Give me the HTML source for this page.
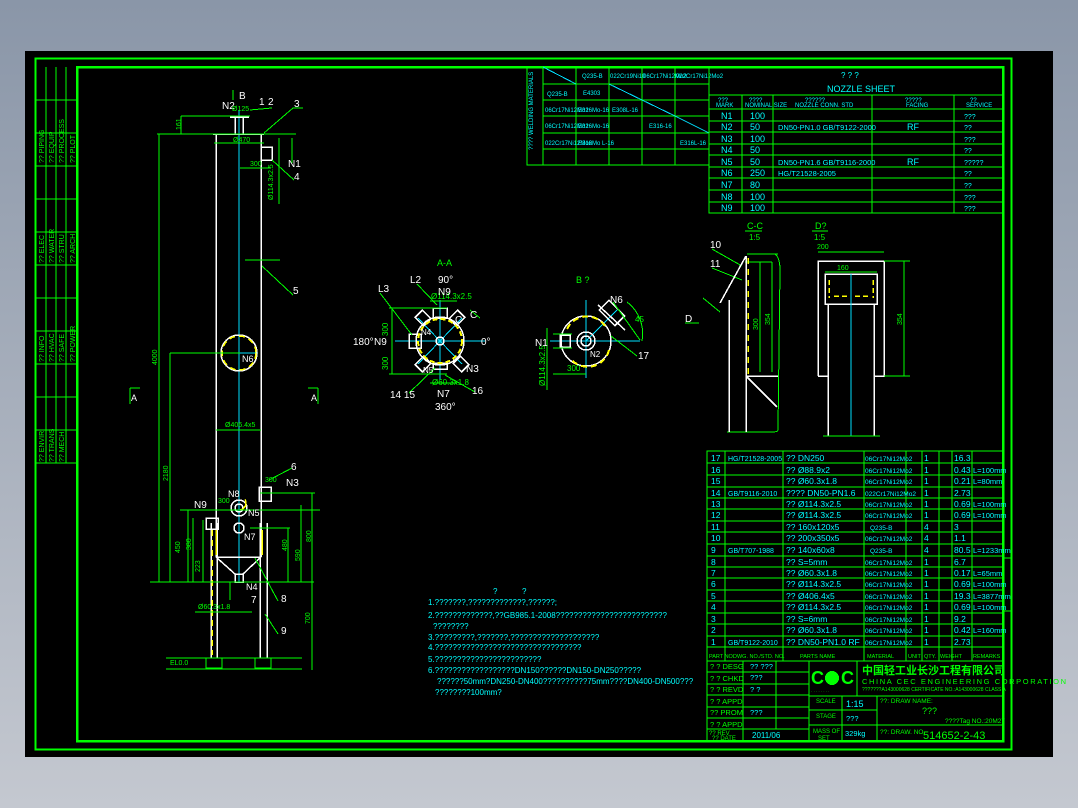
<!DOCTYPE html>
<html><head><meta charset="utf-8"><style>
html,body{margin:0;padding:0;width:1078px;height:808px;overflow:hidden;background:linear-gradient(#8a96a8,#c4c8d0);}
svg{position:absolute;left:0;top:0}
text{font-family:"Liberation Sans","Noto Sans CJK SC",sans-serif}
.g{stroke:#00ff00;fill:none;stroke-width:1}
.G{stroke:#00ff00;fill:none;stroke-width:2}
.w{stroke:#fff;fill:none;stroke-width:1.5}
.c{stroke:#00e0ff;fill:none;stroke-width:1}
.y{stroke:#ffff00;fill:none;stroke-width:2;stroke-dasharray:6 4}
.tc{fill:#00ffff;font-size:9px}
.tg{fill:#00ff00;font-size:8px}
.tw{fill:#fff;font-size:10px}
</style></head><body>
<svg width="1078" height="808" viewBox="0 0 1078 808" shape-rendering="crispEdges">
<rect x="25" y="51" width="1028" height="706" fill="#000"/>
<!-- frames -->
<rect x="35.5" y="58.5" width="976" height="691" class="G"/>
<rect x="77" y="67" width="926" height="674" class="G" style="stroke-width:2.5"/>
<!-- left strip -->
<g class="g">
<line x1="46" y1="67" x2="46" y2="463"/><line x1="56" y1="67" x2="56" y2="463"/><line x1="66" y1="67" x2="66" y2="463"/>
<line x1="35" y1="100" x2="77" y2="100"/><line x1="35" y1="133" x2="77" y2="133"/><line x1="35" y1="166" x2="77" y2="166"/>
<line x1="35" y1="199" x2="77" y2="199"/><line x1="35" y1="232" x2="77" y2="232"/><line x1="35" y1="265" x2="77" y2="265"/>
<line x1="35" y1="298" x2="77" y2="298"/><line x1="35" y1="331" x2="77" y2="331"/><line x1="35" y1="364" x2="77" y2="364"/>
<line x1="35" y1="397" x2="77" y2="397"/><line x1="35" y1="430" x2="77" y2="430"/><line x1="35" y1="463" x2="77" y2="463"/>
</g>
<g class="tg" style="font-size:7px">
<text transform="translate(44,163) rotate(-90)">?? PIPING</text><text transform="translate(54,163) rotate(-90)">?? EQUIP</text><text transform="translate(64,163) rotate(-90)">?? PROCESS</text><text transform="translate(75,163) rotate(-90)">?? PLOT</text>
<text transform="translate(44,263) rotate(-90)">?? ELEC</text><text transform="translate(54,263) rotate(-90)">?? WATER</text><text transform="translate(64,263) rotate(-90)">?? STRU</text><text transform="translate(75,263) rotate(-90)">?? ARCH</text>
<text transform="translate(44,362) rotate(-90)">?? INFO</text><text transform="translate(54,362) rotate(-90)">?? HVAC</text><text transform="translate(64,362) rotate(-90)">?? SAFE</text><text transform="translate(75,362) rotate(-90)">?? POWER</text>
<text transform="translate(44,462) rotate(-90)">?? ENVIR</text><text transform="translate(54,462) rotate(-90)">?? TRANS</text><text transform="translate(64,462) rotate(-90)">?? MECH</text>
</g>
<!-- welding table -->
<g class="g">
<rect x="527" y="67" width="182" height="98"/>
<line x1="543" y1="67" x2="543" y2="165"/><line x1="576" y1="67" x2="576" y2="165"/><line x1="609" y1="67" x2="609" y2="165"/><line x1="642" y1="67" x2="642" y2="165"/><line x1="675" y1="67" x2="675" y2="165"/>
<line x1="543" y1="84" x2="709" y2="84"/><line x1="543" y1="100" x2="709" y2="100"/><line x1="543" y1="116" x2="709" y2="116"/><line x1="543" y1="133" x2="709" y2="133"/><line x1="543" y1="149" x2="709" y2="149"/>
</g>
<g class="c"><line x1="543" y1="67" x2="576" y2="84"/><line x1="609" y1="84" x2="642" y2="100"/><line x1="642" y1="100" x2="675" y2="116"/><line x1="675" y1="116" x2="709" y2="133"/></g>
<g class="tc" style="font-size:6px">
<text x="582" y="78">Q235-B</text><text x="610" y="78">022Cr19Ni10</text><text x="643" y="78">06Cr17Ni12Mo2</text><text x="676" y="78">022Cr17Ni12Mo2</text>
<text x="547" y="96">Q235-B</text><text x="583" y="95">E4303</text>
<text x="545" y="112">06Cr17Ni12Mo2</text><text x="578" y="112">E316Mo-16</text><text x="612" y="112">E308L-16</text>
<text x="545" y="128">06Cr17Ni12Mo2</text><text x="578" y="128">E316Mo-16</text><text x="649" y="128">E316-16</text>
<text x="545" y="145">022Cr17Ni12Mo2</text><text x="578" y="145">E316Mo L-16</text><text x="680" y="145">E316L-16</text>
<text transform="translate(533,150) rotate(-90)">???? WELDING MATERIALS</text>
</g>
<!-- nozzle table -->
<g class="g">
<rect x="709" y="67" width="294" height="146"/>
<line x1="709" y1="95" x2="1003" y2="95"/><line x1="709" y1="109" x2="1003" y2="109"/>
<line x1="709" y1="121" x2="1003" y2="121"/><line x1="709" y1="132" x2="1003" y2="132"/><line x1="709" y1="144" x2="1003" y2="144"/><line x1="709" y1="155" x2="1003" y2="155"/><line x1="709" y1="167" x2="1003" y2="167"/><line x1="709" y1="178" x2="1003" y2="178"/><line x1="709" y1="190" x2="1003" y2="190"/><line x1="709" y1="202" x2="1003" y2="202"/>
<line x1="742" y1="95" x2="742" y2="213"/><line x1="773" y1="95" x2="773" y2="213"/><line x1="872" y1="95" x2="872" y2="213"/><line x1="954" y1="95" x2="954" y2="213"/>
</g>
<g class="tc">
<text x="841" y="78" font-size="8">? ? ?</text><text x="827" y="92" font-size="9">NOZZLE SHEET</text>
<g font-size="6"><text x="718" y="102">???</text><text x="716" y="107">MARK</text><text x="749" y="102">????</text><text x="745" y="107">NOMINAL SIZE</text><text x="805" y="102">??????</text><text x="795" y="107">NOZZLE CONN. STD</text><text x="905" y="102">?????</text><text x="906" y="107">FACING</text><text x="970" y="102">??</text><text x="966" y="107">SERVICE</text></g>
<text x="721" y="119">N1</text><text x="750" y="119">100</text><text x="964" y="119" font-size="7">???</text>
<text x="721" y="130">N2</text><text x="750" y="130">50</text><text x="778" y="130" font-size="7.5">DN50-PN1.0 GB/T9122-2000</text><text x="907" y="130">RF</text><text x="964" y="130" font-size="7">??</text>
<text x="721" y="142">N3</text><text x="750" y="142">100</text><text x="964" y="142" font-size="7">???</text>
<text x="721" y="153">N4</text><text x="750" y="153">50</text><text x="964" y="153" font-size="7">??</text>
<text x="721" y="165">N5</text><text x="750" y="165">50</text><text x="778" y="165" font-size="7.5">DN50-PN1.6 GB/T9116-2000</text><text x="907" y="165">RF</text><text x="964" y="165" font-size="7">?????</text>
<text x="721" y="176">N6</text><text x="750" y="176">250</text><text x="778" y="176" font-size="7.5">HG/T21528-2005</text><text x="964" y="176" font-size="7">??</text>
<text x="721" y="188">N7</text><text x="750" y="188">80</text><text x="964" y="188" font-size="7">??</text>
<text x="721" y="200">N8</text><text x="750" y="200">100</text><text x="964" y="200" font-size="7">???</text>
<text x="721" y="211">N9</text><text x="750" y="211">100</text><text x="964" y="211" font-size="7">???</text>
</g>
<!-- vessel elevation -->
<g class="c"><line x1="239" y1="110" x2="239" y2="582"/><line x1="222" y1="353" x2="258" y2="353"/></g>
<g class="w">
<line x1="216" y1="134" x2="216" y2="557"/><line x1="261" y1="134" x2="261" y2="557"/>
<line x1="213" y1="134" x2="264" y2="134"/>
<line x1="235" y1="118" x2="235" y2="134"/><line x1="243" y1="118" x2="243" y2="134"/><line x1="230" y1="117" x2="249" y2="117"/>
<rect x="261" y="147" width="11" height="13"/>
<circle cx="239" cy="353" r="18"/>
<line x1="216" y1="557" x2="261" y2="557"/><line x1="216" y1="557" x2="235" y2="574"/><line x1="261" y1="557" x2="243" y2="574"/><rect x="235" y="574" width="8" height="8"/>
<line x1="211" y1="523" x2="211" y2="658"/><line x1="217" y1="523" x2="217" y2="658"/><line x1="260" y1="523" x2="260" y2="658"/><line x1="267" y1="523" x2="267" y2="658"/>
<rect x="206" y="518" width="12" height="11"/><rect x="259" y="487" width="12" height="14"/>
<circle cx="239" cy="508" r="8"/><circle cx="239" cy="508" r="4"/><circle cx="239" cy="528" r="5"/>
</g>
<circle cx="239" cy="353" r="17" class="y" style="stroke-width:1.5"/>
<line x1="212" y1="530" x2="212" y2="655" class="y" style="stroke-width:1.5"/><line x1="216" y1="530" x2="216" y2="555" stroke="#ff0" stroke-width="1.5"/><line x1="262" y1="530" x2="262" y2="555" stroke="#ff0" stroke-width="1.5"/>
<circle cx="239" cy="503" r="7" stroke="#ff0" fill="none" stroke-width="1.5" stroke-dasharray="10 30"/>
<g class="g">
<rect x="206" y="658" width="16" height="10"/><rect x="255" y="658" width="16" height="10"/>
<line x1="166" y1="669" x2="302" y2="669"/><line x1="166" y1="658" x2="302" y2="658" />
<line x1="157" y1="134" x2="296" y2="134"/><line x1="159" y1="134" x2="159" y2="582"/><line x1="170" y1="353" x2="170" y2="582"/><line x1="170" y1="353" x2="240" y2="353"/>
<line x1="150" y1="582" x2="314" y2="582"/>
<line x1="181" y1="116" x2="250" y2="116"/><line x1="181" y1="116" x2="181" y2="134"/>
<line x1="214" y1="143" x2="264" y2="143"/><line x1="292" y1="138" x2="292" y2="163"/><line x1="279" y1="138" x2="279" y2="204"/>
<line x1="240" y1="168" x2="271" y2="168"/><line x1="264" y1="133" x2="293" y2="108"/><line x1="293" y1="108" x2="303" y2="108"/>
<line x1="272" y1="160" x2="294" y2="180"/><line x1="250" y1="110" x2="272" y2="108"/>
<line x1="245" y1="260" x2="280" y2="260"/><line x1="262" y1="266" x2="293" y2="295"/>
<line x1="216" y1="430" x2="261" y2="430"/>
<line x1="180" y1="510" x2="320" y2="510"/><line x1="193" y1="518" x2="193" y2="582"/><line x1="203" y1="520" x2="203" y2="582"/><line x1="188" y1="510" x2="188" y2="582"/>
<line x1="260" y1="493" x2="315" y2="493"/><line x1="312" y1="493" x2="312" y2="670"/><line x1="301" y1="505" x2="301" y2="582"/>
<line x1="250" y1="528" x2="290" y2="528"/><line x1="288" y1="528" x2="288" y2="582"/>
<line x1="195" y1="612" x2="252" y2="612"/><line x1="230" y1="582" x2="230" y2="600"/>
<line x1="269" y1="480" x2="292" y2="468"/><line x1="255" y1="558" x2="278" y2="601"/><line x1="265" y1="614" x2="278" y2="634"/>
<line x1="130" y1="388" x2="130" y2="404"/><line x1="130" y1="388" x2="140" y2="388"/><line x1="318" y1="388" x2="318" y2="404"/><line x1="308" y1="388" x2="318" y2="388"/>
<line x1="233" y1="90" x2="233" y2="100"/>
</g>
<g class="tw">
<text x="239" y="99" font-size="10">B</text><text x="222" y="109">N2</text><text x="259" y="105">1</text><text x="268" y="105">2</text><text x="294" y="107">3</text>
<text x="288" y="167">N1</text><text x="294" y="180">4</text><text x="293" y="294">5</text><text x="242" y="362" font-size="9">N6</text>
<text x="291" y="470">6</text><text x="286" y="486">N3</text><text x="194" y="508">N9</text><text x="228" y="497" font-size="9">N8</text><text x="248" y="516" font-size="9">N5</text><text x="244" y="540" font-size="9">N7</text><text x="246" y="590" font-size="9">N4</text><text x="251" y="603">7</text><text x="281" y="602">8</text><text x="281" y="634">9</text>
<text x="131" y="401" font-size="9">A</text><text x="311" y="401" font-size="9">A</text>
</g>
<g class="tg" style="font-size:7px">
<text x="232" y="111">Ø125</text><text x="233" y="142">Ø470</text><text x="250" y="166">300</text><text transform="translate(273,200) rotate(-90)">Ø114.3x2.5</text>
<text transform="translate(157,365) rotate(-90)">4000</text><text transform="translate(168,481) rotate(-90)">2180</text><text transform="translate(181,130) rotate(-90)">161</text>
<text x="225" y="427">Ø406.4x5</text><text x="265" y="482">300</text><text x="218" y="503">300</text>
<text transform="translate(180,553) rotate(-90)">450</text><text transform="translate(191,550) rotate(-90)">380</text><text transform="translate(200,572) rotate(-90)">223</text>
<text transform="translate(287,551) rotate(-90)">480</text><text transform="translate(300,561) rotate(-90)">590</text><text transform="translate(311,542) rotate(-90)">800</text>
<text x="198" y="609">Ø60.3x1.8</text><text transform="translate(310,624) rotate(-90)">700</text><text x="170" y="665">EL0.0</text>
</g>
<!-- A-A -->
<g class="c"><line x1="395" y1="341" x2="485" y2="341"/><line x1="440" y1="300" x2="440" y2="380"/><line x1="418" y1="318" x2="462" y2="364"/><line x1="418" y1="364" x2="462" y2="318"/></g>
<g class="w">
<circle cx="440" cy="341" r="24"/><circle cx="440" cy="341" r="4"/>
<rect x="433" y="308" width="14" height="10"/><rect x="409" y="334" width="12" height="14"/><rect x="433" y="363" width="14" height="6"/>
<rect x="418" y="312" width="10" height="12" transform="rotate(-45 423 318)"/><rect x="452" y="312" width="10" height="12" transform="rotate(45 457 318)"/>
<rect x="418" y="358" width="10" height="12" transform="rotate(45 423 364)"/><rect x="456" y="358" width="10" height="12" transform="rotate(-45 461 364)"/>
</g>
<circle cx="440" cy="341" r="22" stroke="#ff0" fill="none" stroke-width="2" stroke-dasharray="5 3"/>
<g class="g"><line x1="389" y1="308" x2="447" y2="308"/><line x1="389" y1="374" x2="447" y2="374"/><line x1="392" y1="308" x2="392" y2="374"/>
<line x1="380" y1="293" x2="412" y2="335"/><line x1="417" y1="284" x2="437" y2="305"/><line x1="409" y1="393" x2="435" y2="368"/><line x1="445" y1="375" x2="475" y2="392"/>
<line x1="430" y1="301" x2="457" y2="301"/><line x1="430" y1="383" x2="457" y2="383"/><line x1="470" y1="310" x2="480" y2="318"/></g>
<g class="tg"><text x="437" y="266" font-size="9">A-A</text><text transform="translate(388,336) rotate(-90)">300</text><text transform="translate(388,370) rotate(-90)">300</text><text x="431" y="299">Ø114.3x2.5</text><text x="432" y="385">Ø60.3x1.8</text></g>
<g class="tw" font-size="9"><text x="438" y="283">90°</text><text x="438" y="295">N9</text><text x="410" y="283">L2</text><text x="378" y="292">L3</text><text x="353" y="345">180°</text><text x="374" y="345">N9</text><text x="481" y="345">0°</text><text x="421" y="335" font-size="8">N4</text><text x="466" y="372">N3</text><text x="423" y="373" font-size="8">N5</text><text x="437" y="397">N7</text><text x="435" y="410">360°</text><text x="390" y="398">14 15</text><text x="472" y="394">16</text><text x="455" y="323">C</text><text x="470" y="318">C</text></g>
<!-- B view -->
<g class="c"><line x1="550" y1="341" x2="640" y2="341"/><line x1="586" y1="300" x2="586" y2="378"/><line x1="586" y1="341" x2="617" y2="310"/></g>
<g class="w"><circle cx="586" cy="341" r="25"/><circle cx="586" cy="341" r="9"/><circle cx="586" cy="341" r="5"/><rect x="560" y="335" width="10" height="12"/>
<line x1="598" y1="305" x2="625" y2="330"/><rect x="605" y="302" width="14" height="22" transform="rotate(-45 612 313)"/></g>
<path d="M567 329 A22 22 0 0 1 605 326 M609 350 A22 22 0 0 1 570 358" stroke="#ff0" fill="none" stroke-width="2" stroke-dasharray="6 4"/>
<g class="g"><line x1="547" y1="328" x2="547" y2="390"/><line x1="553" y1="334" x2="572" y2="334"/><line x1="553" y1="348" x2="572" y2="348"/><line x1="553" y1="374" x2="586" y2="374"/>
<line x1="613" y1="302" x2="640" y2="340"/><line x1="611" y1="336" x2="637" y2="356"/><path d="M627 302 A40 40 0 0 1 642 341"/></g>
<g class="tg"><text x="576" y="283" font-size="9">B ?</text><text x="567" y="371">300</text><text transform="translate(545,386) rotate(-90)">Ø114.3x2.5</text><text x="635" y="322">45</text></g>
<g class="tw" font-size="9"><text x="535" y="346">N1</text><text x="610" y="303">N6</text><text x="590" y="357" font-size="8">N2</text><text x="638" y="359">17</text></g>
<!-- C-C -->
<g class="g"><line x1="747" y1="254" x2="778" y2="254"/><path d="M747 254 L775 254 Q780 258 780 270 L778 430 Q778 432 772 432 L727 432"/><line x1="745" y1="262" x2="772" y2="262"/><line x1="760" y1="262" x2="760" y2="372"/><line x1="772" y1="262" x2="772" y2="372"/>
<line x1="712" y1="249" x2="742" y2="266"/><line x1="712" y1="268" x2="742" y2="280"/><line x1="703" y1="298" x2="720" y2="312"/><line x1="685" y1="323" x2="699" y2="323"/>
<text x="747" y="229" font-size="9" fill="#0f0" stroke="none">C-C</text><line x1="745" y1="231" x2="762" y2="231"/><text x="749" y="240" font-size="8" fill="#0f0" stroke="none">1:5</text>
<text x="815" y="229" font-size="9" fill="#0f0" stroke="none">D?</text><line x1="812" y1="231" x2="828" y2="231"/><text x="814" y="240" font-size="8" fill="#0f0" stroke="none">1:5</text>
</g>
<g class="w"><line x1="746" y1="256" x2="746" y2="432"/><line x1="729" y1="300" x2="729" y2="432"/><line x1="746" y1="256" x2="720" y2="303"/><line x1="746" y1="376" x2="778" y2="376"/><line x1="746" y1="376" x2="777" y2="407"/></g>
<line x1="748" y1="258" x2="748" y2="376" stroke="#ff0" stroke-width="1.5" stroke-dasharray="6 5"/>
<g class="tw" font-size="8"><text x="710" y="248">10</text><text x="710" y="267">11</text><text x="685" y="322">D</text></g>
<g class="tg" style="font-size:7px"><text transform="translate(758,330) rotate(-90)">300</text><text transform="translate(770,325) rotate(-90)">354</text><text x="817" y="249">200</text><text x="837" y="270">160</text><text transform="translate(902,325) rotate(-90)">354</text></g>
<!-- D -->
<g class="w"><path d="M818 376 L818 261 L884 261 L884 376 L874 376 M828 376 L818 376"/><rect x="825" y="274" width="52" height="30"/><line x1="828" y1="304" x2="828" y2="436"/><line x1="874" y1="304" x2="874" y2="436"/></g>
<line x1="851" y1="274" x2="851" y2="436" class="c"/>
<g class="g"><line x1="818" y1="252" x2="884" y2="252"/><line x1="825" y1="272" x2="877" y2="272"/><line x1="884" y1="261" x2="910" y2="261"/><line x1="884" y1="376" x2="910" y2="376"/><line x1="904" y1="261" x2="904" y2="376"/><line x1="823" y1="436" x2="880" y2="436"/></g>
<path d="M829 280 L829 298 M873 280 L873 298 M834 296 L850 296 M855 296 L870 296" stroke="#ff0" stroke-width="1.5" stroke-dasharray="5 3"/>
<!-- notes -->
<g class="tc" style="font-size:8px">
<text x="493" y="594">?</text><text x="522" y="594">?</text>
<text x="428" y="605">1.???????,?????????????,??????;</text>
<text x="428" y="618">2.?????????????,??GB985.1-2008?????????????????????????</text>
<text x="433" y="629">????????</text>
<text x="428" y="640">3.?????????,???????,????????????????????</text>
<text x="428" y="650">4.?????????????????????????????????</text>
<text x="428" y="662">5.????????????????????????</text>
<text x="428" y="673">6.??????????????????DN150??????DN150-DN250?????</text>
<text x="437" y="684">??????50mm?DN250-DN400??????????75mm????DN400-DN500???</text>
<text x="435" y="695">????????100mm?</text>
</g>
<!-- parts list -->
<g class="g">
<rect x="707" y="451" width="296" height="290"/>
<line x1="725" y1="451" x2="725" y2="661"/><line x1="783" y1="451" x2="783" y2="661"/><line x1="864" y1="451" x2="864" y2="661"/><line x1="906" y1="451" x2="906" y2="661"/><line x1="922" y1="451" x2="922" y2="661"/><line x1="939" y1="451" x2="939" y2="661"/><line x1="952" y1="451" x2="952" y2="661"/><line x1="972" y1="451" x2="972" y2="661"/>
<line x1="707" y1="463" x2="1003" y2="463"/><line x1="707" y1="475" x2="1003" y2="475"/><line x1="707" y1="487" x2="1003" y2="487"/><line x1="707" y1="498" x2="1003" y2="498"/><line x1="707" y1="509" x2="1003" y2="509"/><line x1="707" y1="521" x2="1003" y2="521"/><line x1="707" y1="532" x2="1003" y2="532"/><line x1="707" y1="544" x2="1003" y2="544"/><line x1="707" y1="556" x2="1003" y2="556"/><line x1="707" y1="567" x2="1003" y2="567"/><line x1="707" y1="578" x2="1003" y2="578"/><line x1="707" y1="590" x2="1003" y2="590"/><line x1="707" y1="601" x2="1003" y2="601"/><line x1="707" y1="613" x2="1003" y2="613"/><line x1="707" y1="624" x2="1003" y2="624"/><line x1="707" y1="636" x2="1003" y2="636"/><line x1="707" y1="647" x2="1003" y2="647"/>
<line x1="707" y1="661" x2="1003" y2="661"/>
<line x1="1003" y1="558" x2="1012" y2="558"/><line x1="1003" y1="611" x2="1012" y2="611"/>
<!-- title block -->
<line x1="743" y1="661" x2="743" y2="741"/><line x1="776" y1="661" x2="776" y2="729"/><line x1="809" y1="661" x2="809" y2="741"/>
<line x1="707" y1="672" x2="809" y2="672"/><line x1="707" y1="684" x2="809" y2="684"/><line x1="707" y1="695" x2="809" y2="695"/><line x1="707" y1="707" x2="809" y2="707"/><line x1="707" y1="718" x2="809" y2="718"/><line x1="707" y1="729" x2="809" y2="729"/>
<line x1="857" y1="661" x2="857" y2="696"/><line x1="809" y1="696" x2="1003" y2="696"/>
<line x1="842" y1="696" x2="842" y2="741"/><line x1="877" y1="696" x2="877" y2="741"/><line x1="809" y1="710" x2="877" y2="710"/><line x1="809" y1="725" x2="1003" y2="725"/>
</g>
<g class="tc" style="font-size:8.5px">
<text x="711" y="461">17</text><text x="728" y="461" font-size="7">HG/T21528-2005</text><text x="786" y="461">?? DN250</text>
<text x="711" y="473">16</text><text x="786" y="473">?? Ø88.9x2</text>
<text x="711" y="484">15</text><text x="786" y="484">?? Ø60.3x1.8</text>
<text x="711" y="496">14</text><text x="728" y="496" font-size="7">GB/T9116-2010</text><text x="786" y="496">???? DN50-PN1.6</text>
<text x="711" y="507">13</text><text x="786" y="507">?? Ø114.3x2.5</text>
<text x="711" y="518">12</text><text x="786" y="518">?? Ø114.3x2.5</text>
<text x="711" y="530">11</text><text x="786" y="530">?? 160x120x5</text>
<text x="711" y="541">10</text><text x="786" y="541">?? 200x350x5</text>
<text x="711" y="553">9</text><text x="728" y="553" font-size="7">GB/T707-1988</text><text x="786" y="553">?? 140x60x8</text>
<text x="711" y="565">8</text><text x="786" y="565">?? S=5mm</text>
<text x="711" y="576">7</text><text x="786" y="576">?? Ø60.3x1.8</text>
<text x="711" y="587">6</text><text x="786" y="587">?? Ø114.3x2.5</text>
<text x="711" y="599">5</text><text x="786" y="599">?? Ø406.4x5</text>
<text x="711" y="610">4</text><text x="786" y="610">?? Ø114.3x2.5</text>
<text x="711" y="622">3</text><text x="786" y="622">?? S=6mm</text>
<text x="711" y="633">2</text><text x="786" y="633">?? Ø60.3x1.8</text>
<text x="711" y="645">1</text><text x="728" y="645" font-size="7">GB/T9122-2010</text><text x="786" y="645">?? DN50-PN1.0 RF</text>
<g font-size="6.5"><text x="865" y="461">06Cr17Ni12Mo2</text><text x="865" y="473">06Cr17Ni12Mo2</text><text x="865" y="484">06Cr17Ni12Mo2</text><text x="865" y="496">022Cr17Ni12Mo2</text><text x="865" y="507">06Cr17Ni12Mo2</text><text x="865" y="518">06Cr17Ni12Mo2</text><text x="870" y="530">Q235-B</text><text x="865" y="541">06Cr17Ni12Mo2</text><text x="870" y="553">Q235-B</text><text x="865" y="565">06Cr17Ni12Mo2</text><text x="865" y="576">06Cr17Ni12Mo2</text><text x="865" y="587">06Cr17Ni12Mo2</text><text x="865" y="599">06Cr17Ni12Mo2</text><text x="865" y="610">06Cr17Ni12Mo2</text><text x="865" y="622">06Cr17Ni12Mo2</text><text x="865" y="633">06Cr17Ni12Mo2</text><text x="865" y="645">06Cr17Ni12Mo2</text></g>
<text x="924" y="461">1</text><text x="924" y="473">1</text><text x="924" y="484">1</text><text x="924" y="496">1</text><text x="924" y="507">1</text><text x="924" y="518">1</text><text x="924" y="530">4</text><text x="924" y="541">4</text><text x="924" y="553">4</text><text x="924" y="565">1</text><text x="924" y="576">1</text><text x="924" y="587">1</text><text x="924" y="599">1</text><text x="924" y="610">1</text><text x="924" y="622">1</text><text x="924" y="633">1</text><text x="924" y="645">1</text>
<text x="954" y="461">16.3</text><text x="954" y="473">0.43</text><text x="954" y="484">0.21</text><text x="954" y="496">2.73</text><text x="954" y="507">0.69</text><text x="954" y="518">0.69</text><text x="954" y="530">3</text><text x="954" y="541">1.1</text><text x="954" y="553">80.5</text><text x="954" y="565">6.7</text><text x="954" y="576">0.17</text><text x="954" y="587">0.69</text><text x="954" y="599">19.3</text><text x="954" y="610">0.69</text><text x="954" y="622">9.2</text><text x="954" y="633">0.42</text><text x="954" y="645">2.73</text>
<g font-size="7.5"><text x="973" y="473">L=100mm</text><text x="973" y="484">L=80mm</text><text x="973" y="507">L=100mm</text><text x="973" y="518">L=100mm</text><text x="973" y="553">L=1233mm</text><text x="973" y="576">L=65mm</text><text x="973" y="587">L=100mm</text><text x="973" y="599">L=3877mm</text><text x="973" y="610">L=100mm</text><text x="973" y="633">L=160mm</text></g>
<g font-size="5.5" fill="#0f0"><text x="709" y="658">PART NO.</text><text x="733" y="658">DWG. NO./STD. NO.</text><text x="800" y="658">PARTS NAME</text><text x="867" y="658">MATERIAL</text><text x="908" y="658">UNIT</text><text x="924" y="658">QTY.</text><text x="940" y="658">WEIGHT</text><text x="973" y="658">REMARKS</text></g>
</g>
<g class="tg" style="font-size:7.5px">
<text x="710" y="669">?  ? DESG</text><text x="750" y="669" fill="#0ff">??  ???</text>
<text x="710" y="681">?  ? CHKD</text><text x="750" y="680" fill="#0ff">???</text>
<text x="710" y="692">?  ? REVD</text><text x="750" y="692" fill="#0ff">?  ?</text>
<text x="710" y="704">?  ? APPD</text>
<text x="710" y="715">?? PROM</text><text x="750" y="715" fill="#0ff">???</text>
<text x="710" y="727">?  ? APPD</text>
<text x="709" y="735" font-size="6">?? REV</text><text x="712" y="740" font-size="6">?? DATE</text><text x="752" y="738" fill="#0ff" font-size="8">2011/06</text>
<text x="816" y="703" font-size="6">SCALE</text><text x="846" y="707" fill="#0ff" font-size="9">1:15</text>
<text x="816" y="718" font-size="6">STAGE</text><text x="846" y="721" fill="#0ff">???</text>
<text x="813" y="733" font-size="6">MASS OF</text><text x="818" y="740" font-size="6">SET</text><text x="845" y="736" fill="#0ff">329kg</text>
<text x="880" y="703" font-size="6.5">??: DRAW NAME:</text><text x="922" y="714" font-size="9">???</text><text x="945" y="723" font-size="6.5">????Tag NO.:20M27</text>
<text x="880" y="734" font-size="6.5">??: DRAW. NO.</text><text x="923" y="739" font-size="11">514652-2-43</text>
<text x="862" y="674" font-size="11" font-weight="bold">中国轻工业长沙工程有限公司</text>
<text x="862" y="684" font-size="7.5" letter-spacing="1.6">CHINA CEC ENGINEERING CORPORATION</text>
<text x="862" y="691" font-size="5">???????A143000628 CERTIFICATE NO.:A143000628 CLASS A</text>
</g>
<g fill="#00ff00"><text x="811" y="684" font-size="18" font-weight="bold">C</text><circle cx="832" cy="678" r="7"/><text x="841" y="684" font-size="18" font-weight="bold">C</text><text x="811" y="693" font-size="4">· · · · · · · ·</text></g>
</svg>
</body></html>
